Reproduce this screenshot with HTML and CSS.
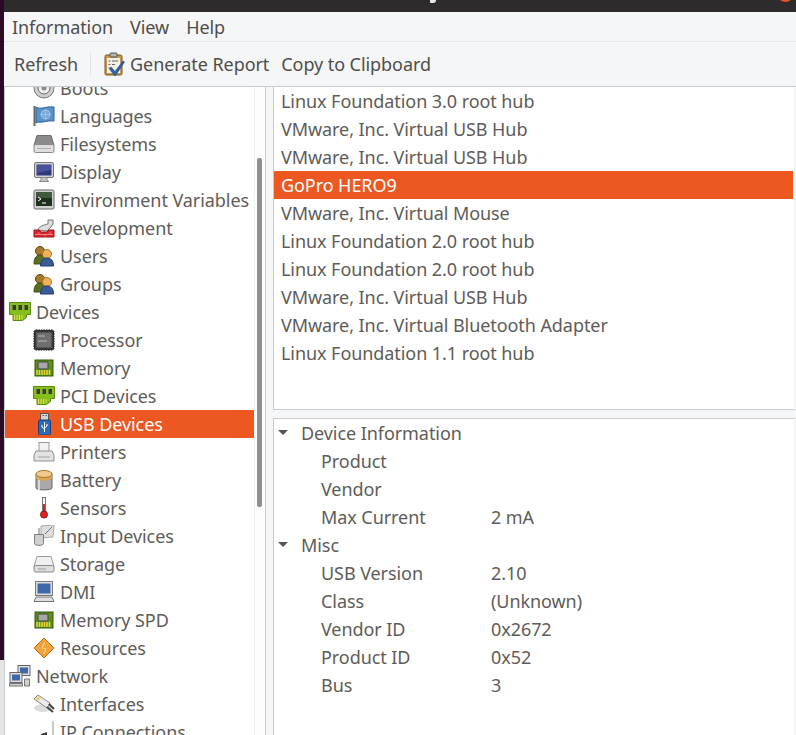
FILE: index.html
```html
<!DOCTYPE html>
<html lang="en">
<head>
<meta charset="utf-8">
<title>System Profiler and Benchmark</title>
<link rel="stylesheet" href="styles.css">
</head>
<body>
<div class="desk"><span class="desk-low"></span></div>
<div class="window">
  <div class="titlebar"><span class="descender"></span><span class="close"></span></div>
  <nav class="menubar"><span>Information</span><span>View</span><span>Help</span></nav>
  <div class="toolbar">
    <span class="tool">Refresh</span>
    <span class="sep"></span>
    <span class="tool">
      <svg class="ic tb" viewBox="0 0 22 24"><rect x="2" y="3" width="17" height="20" rx="1.500" fill="#c9994f" stroke="#7d5518"/><rect x="4" y="6" width="13" height="15" fill="#f1efe8"/><rect x="7" y="1" width="7" height="4" rx="1" fill="#b5b5b5" stroke="#555"/><path d="M5.500 9h2M5.500 12.500h2M5.500 16h2M9 9h6M9 12.500h3" stroke="#666"/><path d="M8 15l4 4.500L20 9l1.500 1L12.500 23.500h-1L6.500 17z" fill="#2f62ad" stroke="#1d4480" stroke-width=".6"/></svg>
      Generate Report</span>
    <span class="tool">Copy to Clipboard</span>
  </div>
  <div class="panes">
    <aside class="side">
      <ul class="tree">
        <li class="row sub"><svg class="ic" viewBox="0 0 22 22"><circle cx="11" cy="11" r="10" fill="#cfcfcf" stroke="#777"/><circle cx="11" cy="11" r="6" fill="#efefef" stroke="#666"/><circle cx="11" cy="11" r="2.500" fill="#8a8a8a"/></svg><span>Boots</span></li>
        <li class="row sub"><svg class="ic" viewBox="0 0 22 22"><path d="M1.500 1v20" stroke="#666" stroke-width="2"/><path d="M3 2l2 1c5 1 9-2 16-1v14c-6-1-11 2-16 1l-2 1z" fill="#5b92cc" stroke="#2d5f96"/><circle cx="12.500" cy="9.500" r="4.500" fill="#7aa8d8" stroke="#a9cbea"/><path d="M8 9.500h9M12.500 5v9" stroke="#a9cbea" stroke-width=".7"/></svg><span>Languages</span></li>
        <li class="row sub"><svg class="ic" viewBox="0 0 22 22"><path d="M4 2.500h14l3 10H1z" fill="#8b8b8b" stroke="#6b6b6b"/><rect x="1" y="11.500" width="20" height="8" rx="1.500" fill="#dedede" stroke="#8a8a8a"/><path d="M4 15.500h14" stroke="#b0b0b0"/></svg><span>Filesystems</span></li>
        <li class="row sub"><svg class="ic" viewBox="0 0 22 22"><rect x="1.500" y="1.500" width="19" height="15" rx="1.500" fill="#d2d2d2" stroke="#777"/><rect x="3.500" y="3.500" width="15" height="11" fill="#2f3a7c"/><path d="M4 4l14 0 0 5-14 3z" fill="#48549a"/><path d="M8 16.500h6v2l1.500 2h-9l1.500-2z" fill="#c4c4c4" stroke="#8a8a8a"/></svg><span>Display</span></li>
        <li class="row sub"><svg class="ic" viewBox="0 0 22 22"><rect x="1" y="1" width="20" height="19" rx="1.500" fill="#cfcfcf" stroke="#666"/><rect x="3" y="3" width="16" height="14" fill="#1e2f1c"/><path d="M3 3h16v6H3z" fill="#3f5a3a"/><path d="M5 8l3 2-3 2M9 14h4" stroke="#fff" fill="none"/></svg><span>Environment Variables</span></li>
        <li class="row sub"><svg class="ic" viewBox="0 0 22 22"><path d="M5 13c1-4 6-5 10-6V3h5v4l-3 4-3 3z" fill="#dcdcdc" stroke="#777"/><path d="M1 13h5l2 2h6l2-2h5v7H1z" fill="#d9272c" stroke="#a01518"/><path d="M2 17.500h18M6 15.500v2M12 17.500v2M17 15v2" stroke="#f09a9a" stroke-width=".8"/></svg><span>Development</span></li>
        <li class="row sub"><svg class="ic" viewBox="0 0 22 22"><circle cx="7" cy="6" r="4.500" fill="#a8792b" stroke="#5f4515"/><path d="M1 19c0-7 3-9 6-9s6 2 6 9z" fill="#5d6e24" stroke="#3c4a13"/><circle cx="14" cy="9" r="4.500" fill="#efb256" stroke="#a8792b"/><path d="M7.500 21c0-6 3-8 6.500-8s6.500 2 6.500 8z" fill="#3b5a9a" stroke="#233a70"/></svg><span>Users</span></li>
        <li class="row sub"><svg class="ic" viewBox="0 0 22 22"><circle cx="7" cy="6" r="4.500" fill="#a8792b" stroke="#5f4515"/><path d="M1 19c0-7 3-9 6-9s6 2 6 9z" fill="#5d6e24" stroke="#3c4a13"/><circle cx="14" cy="9" r="4.500" fill="#efb256" stroke="#a8792b"/><path d="M7.500 21c0-6 3-8 6.500-8s6.500 2 6.500 8z" fill="#3b5a9a" stroke="#233a70"/></svg><span>Groups</span></li>
        <li class="row top"><svg class="ic" viewBox="0 0 22 22"><path d="M.5 1.500h21v12h-4v3l-4 3H4v-6H.5z" fill="#86be1e" stroke="#5b8c10"/><rect x="3.500" y="4" width="3.500" height="5" fill="#3a3a3a"/><rect x="9.500" y="4" width="3.500" height="5" fill="#3a3a3a"/><rect x="15.500" y="4" width="3.500" height="5" fill="#3a3a3a"/><path d="M5.500 14v5M8 14v5M10.500 14v5M13 14v4" stroke="#eadb55"/></svg><span>Devices</span></li>
        <li class="row sub"><svg class="ic" viewBox="0 0 22 22"><rect x="1" y="1" width="20" height="20" rx="2" fill="#3a3a3a" stroke="#111" stroke-dasharray="1.500 1"/><rect x="3.500" y="3.500" width="15" height="15" fill="#6f6f6f"/><path d="M5 7h7M5 12h9" stroke="#bbb"/></svg><span>Processor</span></li>
        <li class="row sub"><svg class="ic" viewBox="0 0 22 22"><rect x="2" y="3" width="18" height="16" fill="#5d8f19" stroke="#2f5a06"/><rect x="5" y="5" width="10" height="7" rx="1" fill="#a7a7a7" stroke="#444"/><path d="M4 13v5M6.500 13v5M9 13v5M11.500 13v5M14 13v5M16.500 13v5" stroke="#f2d43c" stroke-width="1.500"/></svg><span>Memory</span></li>
        <li class="row sub"><svg class="ic" viewBox="0 0 22 22"><path d="M.5 1.500h21v12h-4v3l-4 3H4v-6H.5z" fill="#86be1e" stroke="#5b8c10"/><rect x="3.500" y="4" width="3.500" height="5" fill="#3a3a3a"/><rect x="9.500" y="4" width="3.500" height="5" fill="#3a3a3a"/><rect x="15.500" y="4" width="3.500" height="5" fill="#3a3a3a"/><path d="M5.500 14v5M8 14v5M10.500 14v5M13 14v4" stroke="#eadb55"/></svg><span>PCI Devices</span></li>
        <li class="row sub on"><svg class="ic" viewBox="0 0 22 22"><rect x="7.500" y="0.500" width="8" height="7" fill="#d5d5d5" stroke="#555"/><path d="M9.500 2.500h1.500M12.500 2.500h1.500" stroke="#555"/><rect x="5.500" y="7" width="12" height="15" rx="1.500" fill="#2d6cb5" stroke="#173f75"/><path d="M11.500 9v10M9 12v2l2.500 2M14 11v2l-2.500 2" stroke="#fff" fill="none"/></svg><span>USB Devices</span></li>
        <li class="row sub"><svg class="ic" viewBox="0 0 22 22"><rect x="6" y="1.500" width="10" height="9" fill="#f2f2f2" stroke="#999"/><path d="M3 10h16l2 4v6H1v-6z" fill="#e2e2e2" stroke="#8f8f8f"/><path d="M5 16h12" stroke="#a5a5a5"/></svg><span>Printers</span></li>
        <li class="row sub"><svg class="ic" viewBox="0 0 22 22"><path d="M3 5h16v14c0 2.500-16 2.500-16 0z" fill="#a9a9a9" stroke="#666"/><path d="M6 6v15" stroke="#d8d8d8" stroke-width="2"/><path d="M3 5c1 5 15 5 16 0v3c-1 5-15 5-16 0z" fill="#e2a64c"/><ellipse cx="11" cy="5" rx="8" ry="3.500" fill="#f0c98d" stroke="#a8792b"/></svg><span>Battery</span></li>
        <li class="row sub"><svg class="ic" viewBox="0 0 22 22"><rect x="9.500" y="0.500" width="3" height="16" fill="#f5f5f5" stroke="#777"/><path d="M11 7v10" stroke="#d22" stroke-width="2"/><circle cx="11" cy="17.500" r="3.500" fill="#d22" stroke="#911"/></svg><span>Sensors</span></li>
        <li class="row sub"><svg class="ic" viewBox="0 0 22 22"><path d="M8 1l13-1-1 12-12 1z" fill="#dedede" stroke="#aaa"/><path d="M1.500 9.500h9v9c0 2.500-9 2.500-9 0z" fill="#d0d0d0" stroke="#7d7d7d"/><path d="M6 10V3M12 9l7-7" stroke="#707070"/></svg><span>Input Devices</span></li>
        <li class="row sub"><svg class="ic" viewBox="0 0 22 22"><path d="M4 3.500h14l3 10H1z" fill="#f0f0f0" stroke="#9a9a9a"/><rect x="1" y="12.500" width="20" height="6.500" rx="1.500" fill="#dedede" stroke="#8a8a8a"/><path d="M5 16h8" stroke="#9c9c9c"/></svg><span>Storage</span></li>
        <li class="row sub"><svg class="ic" viewBox="0 0 22 22"><rect x="2.500" y="0.500" width="17" height="14" fill="#dedede" stroke="#777"/><rect x="4.500" y="2.500" width="13" height="10" fill="#3f68a8"/><path d="M3 16h16l2 4.500H1z" fill="#dedede" stroke="#777"/></svg><span>DMI</span></li>
        <li class="row sub"><svg class="ic" viewBox="0 0 22 22"><rect x="2" y="3" width="18" height="16" fill="#5d8f19" stroke="#2f5a06"/><rect x="5" y="5" width="10" height="7" rx="1" fill="#a7a7a7" stroke="#444"/><path d="M4 13v5M6.500 13v5M9 13v5M11.500 13v5M14 13v5M16.500 13v5" stroke="#f2d43c" stroke-width="1.500"/></svg><span>Memory SPD</span></li>
        <li class="row sub"><svg class="ic" viewBox="0 0 22 22"><path d="M11 1l10 10-10 10L1 11z" fill="#f2a138" stroke="#cc6c10"/><path d="M12 5l-3 6 4 1-2 5" stroke="#fbdcaa" fill="none"/></svg><span>Resources</span></li>
        <li class="row top"><svg class="ic" viewBox="0 0 22 22"><rect x="9" y="0.500" width="12" height="10" fill="#dedede" stroke="#666"/><rect x="11" y="2.500" width="8" height="6" fill="#3f68a8"/><rect x="1" y="7.500" width="12" height="10" fill="#dedede" stroke="#666"/><rect x="3" y="9.500" width="8" height="6" fill="#3f68a8"/><path d="M.5 18.500h13v2.500H.5zM15.500 14h5v7h-5z" fill="#cfcfcf" stroke="#777"/></svg><span>Network</span></li>
        <li class="row sub"><svg class="ic" viewBox="0 0 22 22"><ellipse cx="10" cy="15" rx="9" ry="4" fill="#dcdcdc"/><path d="M1 6l4-4 12 8-3 5z" fill="#ececec" stroke="#8a8a8a"/><path d="M2 6l3-3 3 2-3 3z" fill="#e8d27a"/><path d="M14 14l6 5M16 11l5 5" stroke="#444" stroke-width="2"/></svg><span>Interfaces</span></li>
        <li class="row sub"><svg class="ic" viewBox="0 0 22 22"><path d="M0 16h8v6H0z" fill="#555"/><path d="M8 13l6-2v11H8z" fill="#3f3f3f"/><path d="M14 14h4v2h-4zM14 18h4v2h-4z" fill="#d9b73a"/><path d="M20 0v22" stroke="#c8c8c8" stroke-width="2"/></svg><span>IP Connections</span></li>
      </ul>
      <span class="track"><span class="thumb"></span></span>
    </aside>
    <div class="main">
      <ul class="list">
        <li>Linux Foundation 3.0 root hub</li>
        <li>VMware, Inc. Virtual USB Hub</li>
        <li>VMware, Inc. Virtual USB Hub</li>
        <li class="on">GoPro HERO9</li>
        <li>VMware, Inc. Virtual Mouse</li>
        <li>Linux Foundation 2.0 root hub</li>
        <li>Linux Foundation 2.0 root hub</li>
        <li>VMware, Inc. Virtual USB Hub</li>
        <li>VMware, Inc. Virtual Bluetooth Adapter</li>
        <li>Linux Foundation 1.1 root hub</li>
      </ul>
      <div class="info">
        <div class="group"><span class="arrow"></span>Device Information</div>
        <div class="kv"><span class="k">Product</span><span></span></div>
        <div class="kv"><span class="k">Vendor</span><span></span></div>
        <div class="kv"><span class="k">Max Current</span><span>2 mA</span></div>
        <div class="group"><span class="arrow"></span>Misc</div>
        <div class="kv"><span class="k">USB Version</span><span>2.10</span></div>
        <div class="kv"><span class="k">Class</span><span>(Unknown)</span></div>
        <div class="kv"><span class="k">Vendor ID</span><span>0x2672</span></div>
        <div class="kv"><span class="k">Product ID</span><span>0x52</span></div>
        <div class="kv"><span class="k">Bus</span><span>3</span></div>
      </div>
    </div>
  </div>
</div>
</body>
</html>
```
FILE: styles.css
```css
* { box-sizing: border-box; }
html, body { margin: 0; height: 100%; overflow: hidden; }
body {
  background: #2c0a26;
  font-family: "Noto Sans", sans-serif;
  font-size: 18px;
  letter-spacing: -0.07px;
  color: #5e5c58;
  display: flex;
  width: 796px;
  height: 735px;
}
.desk { width: 4px; flex: none; position: relative; }
.desk-low {
  position: absolute;
  left: 0;
  right: 0;
  top: 660px;
  bottom: 0;
  background: #e4e4e4;
}
.window {
  flex: 1;
  display: flex;
  flex-direction: column;
  background: #f5f6f7;
  min-width: 0;
}
.titlebar {
  height: 12px;
  background: #2d2b2b;
  flex: none;
  position: relative;
}
.descender {
  position: absolute;
  left: 426px;
  top: 0;
  width: 6px;
  height: 3px;
  border-radius: 0 0 4px 1px;
  background: #e8e8e8;
}
.close {
  position: absolute;
  right: 4px;
  top: -8px;
  width: 13px;
  height: 10px;
  border-radius: 50%;
  background: #e95420;
}
.menubar {
  height: 30px;
  display: flex;
  align-items: center;
  gap: 17px;
  padding-left: 8px;
  border-bottom: 1px solid #e6e7e8;
  flex: none;
  color: #4f4d4a;
}
.toolbar {
  height: 44px;
  display: flex;
  align-items: center;
  padding-left: 10px;
  flex: none;
  color: #4f4d4a;
}
.sep { width: 1px; height: 24px; background: #e3e4e5; margin-right: 12px; }
.tool { display: flex; align-items: center; gap: 5px; margin-right: 12px; }
.panes {
  flex: 1;
  display: flex;
  gap: 7px;
  min-height: 0;
  border-top: 1px solid #c7ccd1;
}
.side {
  width: 262px;
  flex: none;
  background: #fff;
  border-left: 1px solid #c7ccd1;
  border-right: 1px solid #c7ccd1;
  overflow: hidden;
  position: relative;
}
.tree { list-style: none; margin: -13px 0 0; padding: 0; }
.row {
  height: 28px;
  display: flex;
  align-items: center;
  gap: 5px;
  white-space: nowrap;
}
.row.sub { padding-left: 28px; }
.row.top { padding-left: 4px; }
.row.on { background: #ec5722; color: #fff; width: 249px; }
.ic { width: 22px; height: 22px; flex: none; }
.ic.tb { width: 22px; height: 24px; }
.track {
  position: absolute;
  right: 0;
  top: 0;
  bottom: 0;
  width: 11px;
  background: #fdfdfd;
  border-left: 1px solid #f0f1f2;
}
.thumb {
  position: absolute;
  left: 2px;
  top: 71px;
  height: 349px;
  width: 5px;
  border-radius: 2px;
  background: #8f8f8f;
}
.main { flex: 1; display: flex; flex-direction: column; gap: 8px; min-width: 0; }
.list {
  list-style: none;
  margin: 0;
  padding: 0;
  height: 323px;
  background: #fff;
  border-left: 1px solid #c7ccd1;
  border-right: 2px solid #f6f6f6;
  border-bottom: 1px solid #c7ccd1;
}
.list li { height: 28px; display: flex; align-items: center; padding-left: 7px; }
.list li.on { background: #ec5722; color: #fff; margin-right: 1px; }
.info {
  flex: 1;
  background: #fff;
  border-left: 1px solid #c7ccd1;
  border-right: 2px solid #f6f6f6;
  border-top: 1px solid #c7ccd1;
}
.group { height: 28px; display: flex; align-items: center; padding-left: 27px; position: relative; }
.arrow {
  position: absolute;
  left: 4px;
  top: 11px;
  width: 0;
  height: 0;
  border-left: 5px solid transparent;
  border-right: 5px solid transparent;
  border-top: 5px solid #555;
}
.kv { height: 28px; display: grid; grid-template-columns: 170px 1fr; align-items: center; padding-left: 47px; }
```
